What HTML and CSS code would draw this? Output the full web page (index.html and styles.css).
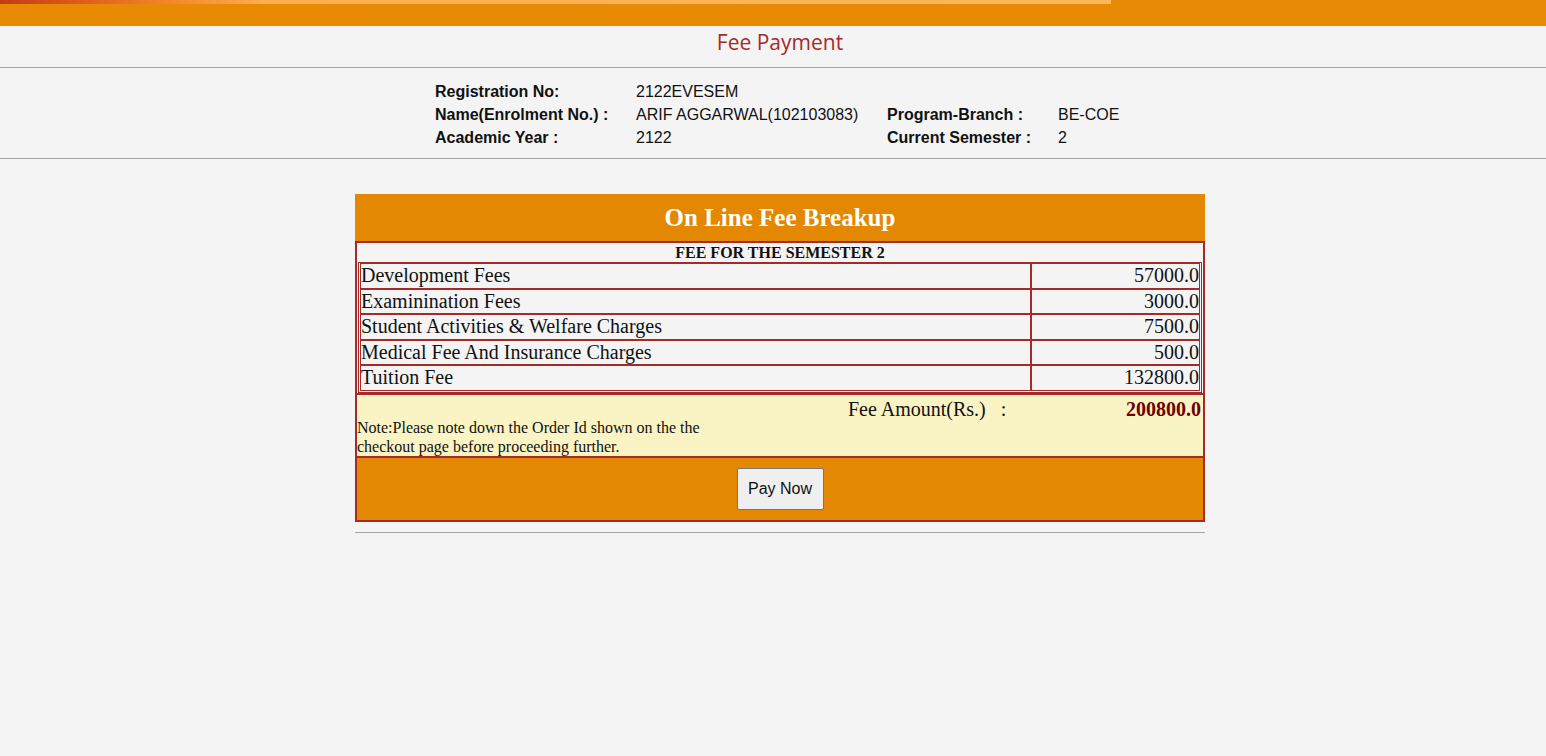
FILE: index.html
```html
<!DOCTYPE html>
<html lang="en">
<head>
<meta charset="utf-8">
<title>Fee Payment</title>
<link rel="stylesheet" href="styles.css">
</head>
<body>
<div class="topbar"><div class="stripe"></div></div>
<div class="title-bar"><h1 class="title">Fee Payment</h1></div>
<div class="info-bar">
  <div class="info">
    <div class="lbl">Registration No:</div><div class="val">2122EVESEM</div><div></div><div></div>
    <div class="lbl">Name(Enrolment No.) :</div><div class="val">ARIF AGGARWAL(102103083)</div><div class="lbl">Program-Branch :</div><div class="val">BE-COE</div>
    <div class="lbl">Academic Year :</div><div class="val">2122</div><div class="lbl">Current Semester :</div><div class="val">2</div>
  </div>
</div>
<div class="page">
  <div class="box">
    <div class="box-head">On Line Fee Breakup</div>
    <div class="box-body">
      <div class="sem">FEE FOR THE SEMESTER 2</div>
      <table class="fees">
        <tr><td class="name">Development Fees</td><td class="amt">57000.0</td></tr>
        <tr><td class="name">Examinination Fees</td><td class="amt">3000.0</td></tr>
        <tr><td class="name">Student Activities &amp; Welfare Charges</td><td class="amt">7500.0</td></tr>
        <tr><td class="name">Medical Fee And Insurance Charges</td><td class="amt">500.0</td></tr>
        <tr><td class="name">Tuition Fee</td><td class="amt">132800.0</td></tr>
      </table>
      <div class="total">
        <div class="note">Note:Please note down the Order Id shown on the the checkout page before proceeding further.</div>
        <div class="total-lbl">Fee Amount(Rs.)&nbsp;&nbsp;&nbsp;:</div>
        <div class="total-amt">200800.0</div>
      </div>
      <div class="pay-row"><button class="pay-btn" type="button">Pay Now</button></div>
    </div>
  </div>
  <div class="end-rule"></div>
</div>
</body>
</html>
```
FILE: styles.css
```css
html, body {
  margin: 0;
  padding: 0;
  background: #f4f4f4;
}

.topbar {
  height: 26px;
  background: #e88a04;
}

.stripe {
  width: 1111px;
  height: 4px;
  background: linear-gradient(90deg, #c23b16 0%, #e0601b 8%, #f3852a 15%, #fab04f 24%, #fcb75c 100%);
}

.title-bar {
  padding-left: 14px;
  border-bottom: 1px solid #a4a4a4;
}

.title {
  margin: 0;
  height: 41px;
  line-height: 32px;
  text-align: center;
  font-family: "Open Sans", "Noto Sans", sans-serif;
  font-weight: normal;
  font-size: 21px;
  color: #a52a2a;
}

.info-bar {
  padding: 12px 0 9px 14px;
  border-bottom: 1px solid #a4a4a4;
}

.info {
  display: grid;
  grid-template-columns: 201px 251px 171px 67px;
  justify-content: center;
  font-family: "Liberation Sans", Arial, sans-serif;
  font-size: 16px;
  line-height: 23px;
  color: #111;
}

.info .lbl {
  font-weight: bold;
}

.page {
  padding-left: 14px;
  display: flex;
  flex-direction: column;
  align-items: center;
}

.box {
  margin-top: 35px;
  width: 850px;
  font-family: "Liberation Serif", "Times New Roman", serif;
  color: #111;
}

.box-head {
  height: 47px;
  line-height: 47px;
  background: #e38800;
  color: #fff;
  font-size: 25px;
  font-weight: bold;
  text-align: center;
}

.box-body {
  border: 2px solid #a52a2a;
}

.sem {
  height: 19px;
  line-height: 20px;
  text-align: center;
  font-weight: bold;
  font-size: 16px;
}

.fees {
  width: calc(100% - 2px);
  margin: 0 1px;
  border: 1px solid #a52a2a;
  border-spacing: 0;
  padding: 0 1px 1px 1px;
  font-size: 20px;
  line-height: 23.5px;
}

.fees td {
  border: 1px solid #a52a2a;
  padding: 0;
}

.fees .amt {
  width: 167px;
  text-align: right;
  padding: 0;
}

.total {
  display: grid;
  grid-template-columns: 491px auto 1fr;
  height: 61px;
  border-top: 2px solid #a52a2a;
  border-bottom: 2px solid #a52a2a;
  background: #faf4c5;
}

.note {
  align-self: end;
  font-size: 16px;
  line-height: 19px;
  padding-right: 120px;
}

.total-lbl {
  padding-top: 3px;
  font-size: 20px;
  line-height: 23px;
}

.total-amt {
  padding: 3px 2px 0 0;
  font-size: 20px;
  line-height: 23px;
  font-weight: bold;
  text-align: right;
  color: #6e0000;
}

.pay-row {
  display: flex;
  justify-content: center;
  padding: 10px 0;
  background: #e38800;
}

.pay-btn {
  width: 87px;
  height: 42px;
  padding: 0;
  background: #efefef;
  border: 1px solid #767676;
  border-radius: 2px;
  font-family: "Liberation Sans", Arial, sans-serif;
  font-size: 16px;
  color: #111;
}

.end-rule {
  margin-top: 10px;
  width: 850px;
  border-top: 1px solid #a4a4a4;
}
```
